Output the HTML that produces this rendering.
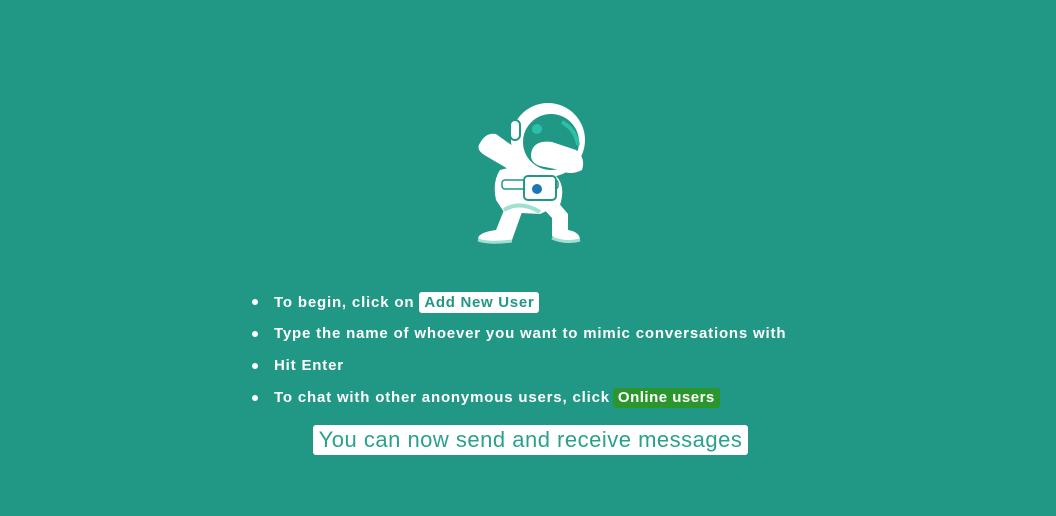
<!DOCTYPE html>
<html><head><meta charset="utf-8"><style>
html,body{margin:0;padding:0;width:1056px;height:516px;background:#219885;overflow:hidden;font-family:"Liberation Sans",sans-serif;}
.ast{position:absolute;left:470px;top:100px;}
ul{position:absolute;left:255px;top:292px;margin:0;padding:0;list-style:none;}
li{position:relative;padding-left:19px;height:32px;line-height:20px;color:#fff;font-weight:bold;font-size:15px;letter-spacing:0.82px;white-space:nowrap;}
li:before{content:"";position:absolute;left:-3px;top:7px;width:6px;height:6px;border-radius:50%;background:#fff;}
.b1{display:inline-block;background:#fff;color:#219885;border-radius:3px;padding:0 5px;line-height:21px;margin-left:0;letter-spacing:0.7px;}
.b2{display:inline-block;background:#2b962d;color:#fff;border-radius:3px;padding:0 5px;line-height:20px;margin-left:-2px;letter-spacing:0.5px;}
.final{position:absolute;left:313px;top:425px;width:435px;height:30px;background:#fff;border-radius:3px;color:#2aa18d;font-size:22px;line-height:30px;text-align:center;letter-spacing:0.5px;white-space:nowrap;}
</style></head><body>
<svg class="ast" width="120" height="150" viewBox="470 100 120 150">
 <path d="M480 143 Q475 150 486 156 L520 176 L532 160 L496 134 Q486 132 480 143Z" fill="#fff"/>
 <path d="M500 170 Q492 182 496 200 L504 212 L540 214 L560 205 Q566 186 556 176 L520 165Z" fill="#fff"/>
 <path d="M506 205 L496 230 Q480 232 478 238 Q480 243 500 242 L512 240 L522 212Z" fill="#fff"/>
 <path d="M540 205 L552 218 L552 236 Q560 243 580 240 Q580 232 568 230 L568 214 L556 200Z" fill="#fff"/>
 <path d="M478 240 Q490 244 512 241" stroke="#9fe0cf" stroke-width="3" fill="none"/>
 <path d="M552 238 Q566 244 580 240" stroke="#9fe0cf" stroke-width="3" fill="none"/>
 <circle cx="548" cy="140" r="37" fill="#fff"/>
 <circle cx="551" cy="142" r="28" fill="#219885"/>
 <path d="M562 122 Q576 130 578 145" stroke="#2cc1a7" stroke-width="4" fill="none"/>
 <circle cx="537" cy="129" r="5" fill="#2cc1a7"/>
 <rect x="510" y="120" width="10" height="20" rx="5" fill="#fff" stroke="#219885" stroke-width="2"/>
 <path d="M532 150 Q536 140 552 142 L576 150 Q586 158 582 170 Q570 176 560 170 L540 166 Q528 162 532 150Z" fill="#fff"/>
 <rect x="502" y="180" width="56" height="9" rx="3" fill="#fff" stroke="#219885" stroke-width="1.5"/>
 <rect x="524" y="176" width="32" height="24" rx="4" fill="#fff" stroke="#219885" stroke-width="2"/>
 <circle cx="537" cy="189" r="5" fill="#1d76b5"/>
 <path d="M504 210 Q520 200 540 212" stroke="#9fe0cf" stroke-width="4" fill="none"/>
</svg>
<ul>
<li>To begin, click on <span class="b1">Add New User</span></li>
<li>Type the name of whoever you want to mimic conversations with</li>
<li>Hit Enter</li>
<li>To chat with other anonymous users, click <span class="b2">Online users</span></li>
</ul>
<div class="final">You can now send and receive messages</div>
</body></html>
